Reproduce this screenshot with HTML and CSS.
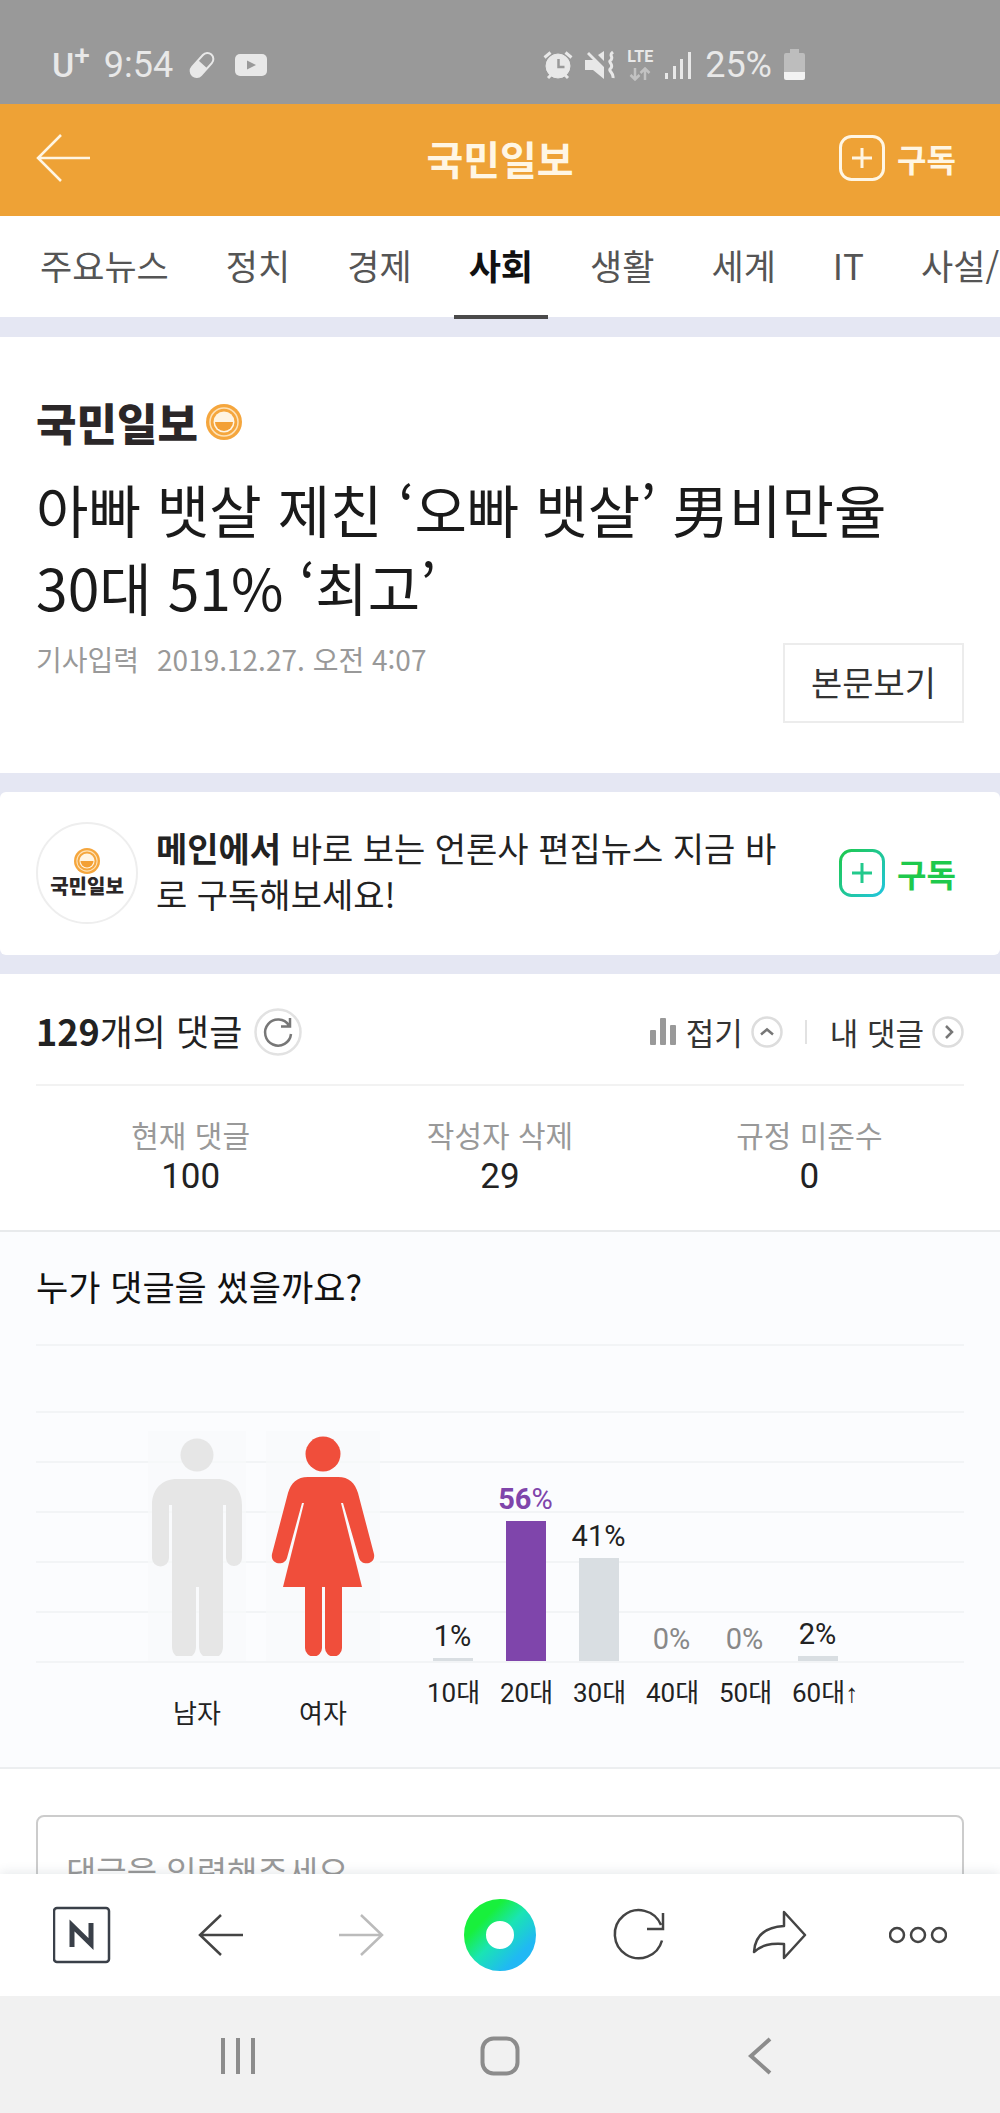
FILE: index.html
```html
<!DOCTYPE html>
<html lang="ko">
<head>
<meta charset="utf-8">
<meta name="viewport" content="width=device-width, initial-scale=1">
<title>국민일보 - 댓글</title>
<link rel="stylesheet" href="styles.css">
</head>
<body>
<svg class="defs" aria-hidden="true">
  <defs>
    <linearGradient id="mint" x1="0" y1="0" x2="1" y2="1"><stop offset="0" stop-color="#1ec94c"/><stop offset="1" stop-color="#22c5dd"/></linearGradient>
    <linearGradient id="green-dot" x1="0.1" y1="0.1" x2="0.9" y2="0.9"><stop offset="0.1" stop-color="#18f03c"/><stop offset="0.5" stop-color="#1ae4b4"/><stop offset="1" stop-color="#20b8f4"/></linearGradient>
    <symbol id="emblem" viewBox="0 0 36 36">
      <circle cx="18" cy="18" r="18" fill="#f5a63d"/>
      <circle cx="18" cy="18" r="14" fill="none" stroke="#fde2b8" stroke-width="1.5"/>
      <circle cx="18" cy="18" r="10.5" fill="#fff4e2"/>
      <path d="M9 18h18a9 9 0 0 1-18 0z" fill="#f3a035"/>
    </symbol>
  </defs>
</svg>

<header class="status">
  <div class="status-group">
    <span class="carrier">U<sup>+</sup></span>
    <span class="clock">9:54</span>
    <svg width="30" height="30" viewBox="0 0 30 30"><g transform="rotate(42 15 15)"><rect x="9" y="1" width="12" height="28" rx="6" fill="none" stroke="#e8e8e8" stroke-width="2"/><path d="M9 14h12v9a6 6 0 0 1-12 0z" fill="#e8e8e8"/></g></svg>
    <svg class="play" width="32" height="22" viewBox="0 0 32 22"><rect width="32" height="22" rx="5" fill="#e8e8e8"/><path d="M12 6.500l9 4.500-9 4.500z" fill="#999"/></svg>
  </div>
  <div class="status-group status-right">
    <svg width="30" height="30" viewBox="0 0 30 30" fill="none" stroke="#e8e8e8"><circle cx="15" cy="16" r="12" fill="#e8e8e8"/><path d="M1.500 7.500l6-5M28.500 7.500l-6-5M5 28l4-4M25 28l-4-4" stroke-width="3"/><path d="M15.500 9v8h6" stroke="#999" stroke-width="2.500"/></svg>
    <svg width="30" height="30" viewBox="0 0 30 30" fill="#e8e8e8"><path d="M0 10h8L2 4l2-2 15 15v12L8 20H0zM13 5l6-4v10z"/><path d="M28 2c-5 4 1 4-2 8-4 2 3 4 0 8-4 3 3 4 2 10" fill="none" stroke="#e8e8e8" stroke-width="3"/></svg>
    <span class="lte">LTE<svg width="22" height="14" viewBox="0 0 22 14" fill="none" stroke="#c2c2c2" stroke-width="2.500"><path d="M6 1v11M1.500 8l4.500 4.500L10.500 8M16 13V2M11.500 6L16 1.500 20.500 6"/></svg></span>
    <svg width="28" height="28" viewBox="0 0 28 28" fill="#e8e8e8"><rect x="0" y="22" width="3" height="6"/><rect x="8" y="15" width="3" height="13"/><rect x="15" y="8" width="3" height="20"/><rect x="23" y="1" width="3" height="27"/></svg>
    <span class="clock">25%</span>
    <svg width="22" height="32" viewBox="0 0 22 32"><path d="M6 0h9v4h4q2 0 2 2v17H0V6q0-2 2-2h4z" fill="#bdbdbd"/><path d="M0 23h21v6q0 2-2 2H2q-2 0-2-2z" fill="#f2f2f2"/></svg>
  </div>
</header>

<div class="masthead">
  <button class="icon-btn" aria-label="뒤로"><svg width="54" height="48" viewBox="0 0 54 48" fill="none" stroke="#fff6e4" stroke-width="2.500"><path d="M54 24H2M25 1L2 24l23 23"/></svg></button>
  <h1>국민일보</h1>
  <button class="subscribe"><svg width="46" height="46" viewBox="0 0 46 46" fill="none" stroke="#fff6e4" stroke-width="3"><rect x="1.500" y="1.500" width="43" height="43" rx="11"/><path d="M23 13v20M13 23h20"/></svg>구독</button>
</div>

<nav class="tabs">
  <a href="#">주요뉴스</a><a href="#">정치</a><a href="#">경제</a><a href="#" class="active" aria-current="page">사회</a><a href="#">생활</a><a href="#">세계</a><a href="#">IT</a><a href="#">사설/</a>
</nav>

<main>
  <article class="article">
    <div class="logo">국민일보<svg width="36" height="36"><use href="#emblem"/></svg></div>
    <h2>아빠 뱃살 제친 ‘오빠 뱃살’ 男비만율 30대 51% ‘최고’</h2>
    <div class="meta">
      <p><span>기사입력</span><time datetime="2019-12-27T04:07">2019.12.27. 오전 4:07</time></p>
      <button class="read">본문보기</button>
    </div>
  </article>

  <section class="promo">
    <div class="badge"><svg width="26" height="26"><use href="#emblem"/></svg><span>국민일보</span></div>
    <p><strong>메인에서</strong> 바로 보는 언론사 편집뉴스 지금 바로 구독해보세요!</p>
    <button class="subscribe mint"><svg width="46" height="48" viewBox="0 0 46 48" fill="none" stroke="url(#mint)" stroke-width="3"><rect x="1.500" y="1.500" width="43" height="45" rx="11"/><path d="M23 14v20M13 24h20" stroke="#22c98c"/></svg>구독</button>
  </section>

  <section class="comments">
    <div class="comments-head">
      <h3><b>129</b>개의 댓글</h3>
      <button class="icon-btn" aria-label="새로고침"><svg width="48" height="48" viewBox="0 0 48 48" fill="none"><circle cx="24" cy="24" r="22.500" stroke="#e2e2e2" stroke-width="2.500"/><path d="M35 17.500A13 13 0 1 0 37 26M36 10v8.500h-9" stroke="#777" stroke-width="2.500"/></svg></button>
      <div class="tools">
        <button class="tool"><svg width="28" height="28" viewBox="0 0 28 28" fill="#999"><rect y="12" width="6" height="15" rx="1"/><rect x="10" y="0" width="6" height="27" rx="1"/><rect x="20" y="7" width="6" height="20" rx="1"/></svg>접기<svg width="32" height="32" viewBox="0 0 32 32" fill="none"><circle cx="16" cy="16" r="14.500" stroke="#ddd" stroke-width="2.500"/><path d="M10 18.500l6-5 6 5" stroke="#777" stroke-width="2.500"/></svg></button>
        <a class="tool" href="#">내 댓글<svg width="32" height="32" viewBox="0 0 32 32" fill="none"><circle cx="16" cy="16" r="14.500" stroke="#ddd" stroke-width="2.500"/><path d="M14 10l6 6-6 6" stroke="#777" stroke-width="2.500"/></svg></a>
      </div>
    </div>
    <dl class="stats">
      <div><dt>현재 댓글</dt><dd>100</dd></div>
      <div><dt>작성자 삭제</dt><dd>29</dd></div>
      <div><dt>규정 미준수</dt><dd>0</dd></div>
    </dl>
  </section>

  <section class="demographics">
    <h3>누가 댓글을 썼을까요?</h3>
    <div class="chart">
      <div class="plot">
        <div class="figure male"><svg width="90" height="218" viewBox="0 0 90 218" fill="#e6e6e6"><circle cx="45" cy="17" r="16.500"/><path d="M25 41h40c15 0 25 10 25 26v53a8 8 0 0 1-16 0V67h-3v142a12 12 0 0 1-24 0v-60h-3v60a12 12 0 0 1-24 0V67h-3v53a8 8 0 0 1-17 0V67c0-16 10-26 25-26z"/></svg></div>
        <div class="figure female"><svg width="104" height="220" viewBox="0 0 104 220" fill="#f04e3b"><circle cx="52" cy="18" r="17.500"/><path d="M37 41h30c11 0 17 6 20 16l16 61c2 10-12 13-15 4L72 67h-2l21 84H71v61a8 8 0 0 1-17 0v-61h-3v61a8 8 0 0 1-17 0v-61H12l21-84h-2l-15 55c-3 9-17 6-15-4l16-61c3-10 9-16 20-16z"/></svg></div>
        <div class="bars">
          <div class="col"><span>1%</span><i style="height:3px"></i></div>
          <div class="col top"><span><b>56</b>%</span><i style="height:140px"></i></div>
          <div class="col"><span>41%</span><i style="height:103px"></i></div>
          <div class="col zero"><span>0%</span><i style="height:0px"></i></div>
          <div class="col zero"><span>0%</span><i style="height:0px"></i></div>
          <div class="col"><span>2%</span><i style="height:5px"></i></div>
        </div>
      </div>
      <div class="axis">
        <span class="male">남자</span><span class="female">여자</span>
        <div class="ages"><span>10대</span><span>20대</span><span>30대</span><span>40대</span><span>50대</span><span>60대↑</span></div>
      </div>
    </div>
  </section>

  <form class="write">
    <textarea aria-label="댓글 입력" placeholder="댓글을 입력해주세요"></textarea>
  </form>
</main>

<nav class="toolbar">
  <button class="icon-btn" aria-label="네이버 홈"><svg width="58" height="58" viewBox="0 0 58 58" fill="none" stroke="#3a4049"><rect x="1" y="2" width="55" height="54" rx="3" stroke-width="2.500"/><path d="M19 41V19.500L38 38V17" stroke-width="5"/></svg></button>
  <button class="icon-btn" aria-label="이전"><svg width="58" height="58" viewBox="0 0 58 58" fill="none" stroke="#444" stroke-width="2.500"><path d="M51 29H8M29 9L8 29l21 20"/></svg></button>
  <button class="icon-btn" aria-label="다음"><svg width="58" height="58" viewBox="0 0 58 58" fill="none" stroke="#bbb" stroke-width="2.500"><path d="M7 29h43M29 9l21 20-21 20"/></svg></button>
  <button class="icon-btn" aria-label="그린닷"><svg width="72" height="72" viewBox="0 0 72 72"><circle cx="36" cy="36" r="25" fill="none" stroke="url(#green-dot)" stroke-width="22"/></svg></button>
  <button class="icon-btn" aria-label="새로고침"><svg width="58" height="58" viewBox="0 0 58 58" fill="none" stroke="#444" stroke-width="2.500"><path d="M52 34.500A24 24 0 1 1 51 19M53 7v16H37"/></svg></button>
  <button class="icon-btn" aria-label="공유"><svg width="58" height="58" viewBox="0 0 58 58" fill="none" stroke="#444" stroke-width="2.500" stroke-linejoin="round"><path d="M34 6l21 23-21 23V38c-14-1-22 1-30 8 1-17 12-25 30-26z"/></svg></button>
  <button class="icon-btn" aria-label="더보기"><svg width="58" height="58" viewBox="0 0 58 58" fill="none" stroke="#444" stroke-width="2.500"><circle cx="8" cy="29" r="7"/><circle cx="29" cy="29" r="7"/><circle cx="50" cy="29" r="7"/></svg></button>
</nav>

<div class="system">
  <button class="icon-btn" aria-label="최근 앱"><svg width="40" height="40" viewBox="0 0 40 40" stroke="#8c8c8c" stroke-width="4"><path d="M5 2v36M20 2v36M35 2v36"/></svg></button>
  <button class="icon-btn" aria-label="홈"><svg width="40" height="40" viewBox="0 0 40 40" fill="none" stroke="#8c8c8c" stroke-width="4"><rect x="2.500" y="2.500" width="35" height="35" rx="11"/></svg></button>
  <button class="icon-btn" aria-label="뒤로"><svg width="40" height="40" viewBox="0 0 40 40" fill="none" stroke="#8c8c8c" stroke-width="4"><path d="M28 3L9 20l19 17"/></svg></button>
</div>
</body>
</html>
```
FILE: styles.css
```css
* { box-sizing: border-box; }

body {
  margin: 0;
  height: 100vh;
  display: flex;
  flex-direction: column;
  overflow: hidden;
  background: #fff;
  color: #222;
  font-family: "Noto Sans CJK KR", sans-serif;
}

h1, h2, h3, p, dl, dd { margin: 0; font-weight: 400; }
button { border: 0; padding: 0; background: none; font: inherit; color: inherit; }
a { color: inherit; text-decoration: none; }
svg { display: block; flex: none; }
.defs { position: absolute; width: 0; height: 0; }
.icon-btn { display: flex; align-items: center; justify-content: center; }

/* Phone status bar */
.status {
  flex: none;
  height: 104px;
  padding: 26px 194px 0 52px;
  display: flex;
  align-items: center;
  justify-content: space-between;
  background: #999;
  color: #e8e8e8;
  font-family: Roboto, sans-serif;
}
.status-group { display: flex; align-items: center; gap: 14px; }
.status-right { gap: 12px; }
.play { margin-left: 4px; }
.carrier { font-size: 34px; font-weight: 500; line-height: 40px; }
.carrier sup { font-size: 28px; line-height: 0; }
.clock { font-size: 36px; line-height: 40px; }
.lte { display: flex; flex-direction: column; align-items: center; gap: 2px; font-size: 16px; line-height: 16px; font-weight: 700; }

/* Masthead */
.masthead {
  flex: none;
  height: 112px;
  padding: 0 36px 4px;
  display: grid;
  grid-template-columns: 1fr auto 1fr;
  align-items: center;
  background: #eea236;
  color: #fff6e4;
}
.masthead .icon-btn { justify-self: start; }
.masthead h1 { font-size: 40px; line-height: 48px; font-weight: 700; }
.subscribe { display: flex; align-items: center; justify-self: end; gap: 12px; margin-right: 8px; font-size: 32px; line-height: 48px; font-weight: 700; white-space: nowrap; }

/* Section tabs */
.tabs {
  flex: none;
  height: 121px;
  padding: 0 25px;
  display: flex;
  gap: 27px;
  border-bottom: 20px solid #e5e7f3;
  overflow-x: clip;
  white-space: nowrap;
  color: #555;
  font-size: 35px;
  line-height: 98px;
}
.tabs a { padding: 0 15px; height: 103px; }
.tabs .active { color: #111; font-weight: 700; border-bottom: 4px solid #4a4a4a; }

/* Article heading */
main { flex: 1; min-height: 0; overflow: hidden; background: #e5e7f3; }
.article { padding: 63px 36px 50px; background: #fff; margin-bottom: 19px; }
.logo { display: flex; align-items: center; gap: 8px; font-size: 44px; line-height: 44px; font-weight: 900; color: #2b2728; }
.article h2 { margin-top: 25px; padding-right: 60px; font-size: 57px; line-height: 78px; color: #1a1a1a; }
.meta { margin-top: 18px; display: flex; align-items: flex-start; justify-content: space-between; }
.meta p { display: flex; gap: 18px; font-size: 28px; line-height: 32px; color: #999; }
.read { padding: 0 26px 4px; height: 80px; border: 2px solid #ececec; font-size: 34px; color: #333; }

/* Subscribe banner */
.promo { padding: 30px 36px 31px; display: flex; align-items: center; gap: 18px; background: #fff; border-radius: 6px; }
.promo p { flex: 1; font-size: 34px; line-height: 46px; color: #222; padding: 0 20px 4px 0; word-break: break-all; }
.promo strong { font-weight: 700; }
.badge {
  flex: none;
  width: 102px;
  height: 102px;
  border: 2px solid #eee;
  border-radius: 50%;
  display: flex;
  flex-direction: column;
  align-items: center;
  justify-content: center;
  font-size: 20px;
  line-height: 24px;
  font-weight: 900;
  color: #2b2728;
}
.mint { color: #1ec94c; }

/* Comment summary */
.comments { margin-top: 19px; background: #fff; padding: 0 36px; border-bottom: 2px solid #e8eaec; }
.comments-head { height: 112px; padding-top: 6px; display: flex; align-items: center; gap: 12px; border-bottom: 2px solid #f2f2f2; }
.comments-head h3 { padding-bottom: 4px; font-size: 36px; line-height: 44px; }
.tools { margin-left: auto; display: flex; align-items: center; }
.tool { display: flex; align-items: center; gap: 8px; font-size: 31px; line-height: 40px; color: #333; }
.tools a { margin-left: 22px; padding-left: 25px; background: linear-gradient(#e2e2e2, #e2e2e2) left center / 2px 24px no-repeat; }
.stats { display: grid; grid-template-columns: repeat(3, 1fr); padding: 27px 0 31px; text-align: center; }
.stats dt { font-size: 30px; line-height: 42px; color: #999; }
.stats dd { font-family: Roboto, sans-serif; font-size: 35px; line-height: 44px; }

/* Who commented */
.demographics { padding: 0 36px; background: #fbfcfe; border-bottom: 2px solid #eceef0; }
.demographics h3 { padding-bottom: 4px; font-size: 35px; line-height: 108px; color: #111; }
.chart { border-top: 2px solid #f2f4f6; padding: 65px 0 38px; font-family: Roboto, "Liberation Sans", "Noto Sans CJK KR", sans-serif; }
.plot {
  height: 252px;
  padding: 0 0 2px 112px;
  display: flex;
  align-items: flex-end;
  background: repeating-linear-gradient(#f2f4f6 0 2px, transparent 2px 50px);
}
.male { width: 98px; margin-right: 20px; }
.female { width: 114px; margin-right: 36px; }
.figure { height: 230px; padding-bottom: 5px; display: flex; align-items: flex-end; justify-content: center; background: rgba(248, 249, 251, 0.7); }
.bars, .ages { display: grid; grid-template-columns: repeat(6, 73px); }
.bars { align-items: end; }
.col { display: flex; flex-direction: column; align-items: center; font-size: 29px; line-height: 34px; color: #222; }
.col span { margin-bottom: 5px; }
.col i { width: 40px; background: #d9dee2; }
.top { color: #7f45ab; }
.top i { background: #7f45ab; }
.zero { color: #888; }
.axis { padding-left: 112px; display: flex; font-size: 26px; line-height: 30px; color: #222; }
.axis > span { padding-top: 36px; text-align: center; }
.ages { padding-top: 15px; }
.ages span { padding-left: 11px; white-space: nowrap; }

/* Comment box */
.write { padding: 46px 36px 40px; background: #fff; }
.write textarea {
  display: block;
  width: 100%;
  height: 200px;
  padding: 32px 28px;
  border: 2px solid #ccc;
  border-radius: 8px;
  resize: none;
  font: 33px/44px "Noto Sans CJK KR", sans-serif;
}
.write textarea::placeholder { color: #999; opacity: 1; }

/* Browser toolbar and system keys */
.toolbar {
  flex: none;
  height: 122px;
  padding: 0 46px;
  display: flex;
  align-items: center;
  justify-content: space-between;
  background: #fff;
  box-shadow: 0 -2px 10px rgba(60, 80, 100, 0.12);
}
.toolbar .icon-btn { width: 72px; }
.system {
  flex: none;
  height: 117px;
  padding: 2px 218px 0;
  display: flex;
  align-items: center;
  justify-content: space-between;
  background: #f1f1f1;
}
```
